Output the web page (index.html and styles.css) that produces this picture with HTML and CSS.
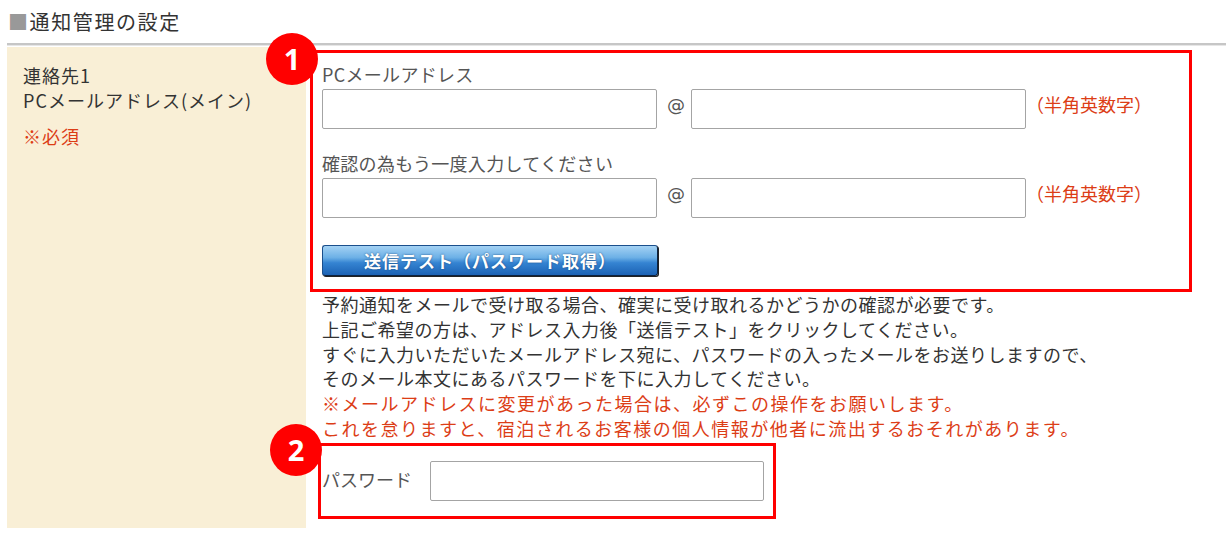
FILE: index.html
```html
<!DOCTYPE html>
<html lang="ja">
<head>
    <meta charset="UTF-8">
    <title>通知管理の設定</title>
    <link rel="stylesheet" href="styles.css">
</head>
<body>
    <div class="page">
        <h2 class="section-title"><span class="mark">■</span>通知管理の設定</h2>

        <div class="setting-row">
            <!-- Left label column -->
            <div class="label-col">
                <p>連絡先1</p>
                <p>PCメールアドレス(メイン)</p>
                <p class="required">※必須</p>
            </div>

            <!-- Right input column -->
            <div class="input-col">
                <div class="mark-box box-mail">
                    <span class="badge">1</span>
                    <div class="field-label">PCメールアドレス</div>
                    <div class="mail-row">
                        <input type="text" class="text-input">
                        <span class="at">@</span>
                        <input type="text" class="text-input">
                        <span class="note">（半角英数字）</span>
                    </div>
                    <div class="field-label second">確認の為もう一度入力してください</div>
                    <div class="mail-row">
                        <input type="text" class="text-input">
                        <span class="at">@</span>
                        <input type="text" class="text-input">
                        <span class="note">（半角英数字）</span>
                    </div>
                    <button type="button" class="send-btn">送信テスト（パスワード取得）</button>
                </div>

                <div class="help">
                    <p>予約通知をメールで受け取る場合、確実に受け取れるかどうかの確認が必要です。</p>
                    <p>上記ご希望の方は、アドレス入力後「送信テスト」をクリックしてください。</p>
                    <p>すぐに入力いただいたメールアドレス宛に、パスワードの入ったメールをお送りしますので、</p>
                    <p>そのメール本文にあるパスワードを下に入力してください。</p>
                    <p class="warn">※メールアドレスに変更があった場合は、必ずこの操作をお願いします。</p>
                    <p class="warn">これを怠りますと、宿泊されるお客様の個人情報が他者に流出するおそれがあります。</p>
                </div>

                <div class="mark-box box-pass">
                    <span class="badge">2</span>
                    <span class="pass-label">パスワード</span>
                    <input type="text" class="text-input pass-input">
                </div>
            </div>
        </div>
    </div>
</body>
</html>
```

FILE: styles.css
```css
:root {
    --text-color: #333333;
    --label-color: #555555;
    --warn-color: #dc3d16;
    --mark-red: #ff0000;
    --beige: #f9efd6;
}

* {
    margin: 0;
    padding: 0;
    box-sizing: border-box;
}

body {
    background: #ffffff;
    font-family: "Noto Sans CJK JP", "Noto Sans", sans-serif;
    color: var(--text-color);
    font-size: 18px;
}

.page {
    padding-left: 7px;
}

/* Section heading */
.section-title {
    height: 45px;
    line-height: 43px;
    padding-left: 1px;
    font-size: 20px;
    font-weight: normal;
    letter-spacing: 1.6px;
    color: #333333;
    border-bottom: 2px solid #c6c6c6;
    box-shadow: 0 1px 0 #e6e6e6;
    margin-bottom: 2px;
}

.section-title .mark {
    color: #999999;
}

/* Row */
.setting-row {
    display: flex;
}

.label-col {
    width: 299px;
    background: var(--beige);
    padding: 16px 0 0 16px;
    line-height: 25px;
    letter-spacing: 1px;
}

.label-col .required {
    margin-top: 11px;
    color: var(--warn-color);
}

.input-col {
    padding: 3px 0 9px 4px;
}

/* Red marker boxes */
.mark-box {
    position: relative;
    border: 3px solid var(--mark-red);
}

.badge {
    position: absolute;
    width: 52px;
    height: 52px;
    border-radius: 50%;
    background: var(--mark-red);
    color: #ffffff;
    font-family: "Open Sans", "Liberation Sans", sans-serif;
    font-weight: bold;
    font-size: 29px;
    line-height: 52px;
    letter-spacing: 0;
    text-align: center;
    z-index: 2;
}

.box-mail {
    width: 882px;
    padding: 9px 0 13px 9px;
}

.box-mail .badge {
    left: -47px;
    top: -20px;
}

.field-label {
    line-height: 24px;
    letter-spacing: 0.3px;
    color: var(--label-color);
}

.field-label.second {
    margin-top: 22px;
}

.mail-row {
    display: flex;
    align-items: center;
    margin-top: 3px;
}

.text-input {
    width: 335px;
    height: 40px;
    border: 1px solid #a4a4a4;
    border-radius: 2px;
    background: #ffffff;
}

.at {
    margin: 0 9px 0 10px;
    width: 15px;
    font-family: "DejaVu Sans", sans-serif;
    font-size: 18px;
    color: #555555;
    position: relative;
    top: -5px;
}

.note {
    margin-left: 0;
    color: var(--warn-color);
    position: relative;
    top: -5px;
}

.send-btn {
    display: block;
    margin-top: 27px;
    width: 336px;
    height: 31px;
    border: 1px solid #1b4f8c;
    border-right-color: #0c2240;
    border-bottom-color: #0c2240;
    border-radius: 3px;
    box-shadow: 1px 1px 0 #222222;
    background: linear-gradient(#a4d2f4 0%, #6cb0e6 40%, #3584d2 58%, #1c62b4 100%);
    color: #ffffff;
    font-family: "Noto Sans CJK JP", sans-serif;
    font-weight: bold;
    font-size: 17px;
    letter-spacing: 1px;
    text-shadow: 0 0 2px #1a4a80;
    line-height: 29px;
}

/* Help text */
.help {
    padding-left: 12px;
    line-height: 24.8px;
    letter-spacing: 0.5px;
    color: var(--text-color);
}

.help p {
    white-space: nowrap;
}

.help .warn {
    color: var(--warn-color);
    letter-spacing: 1.5px;
}

/* Password box */
.box-pass {
    display: flex;
    align-items: center;
    width: 458px;
    height: 76px;
    margin: 2px 0 0 8px;
    padding-left: 1px;
}

.box-pass .badge {
    left: -51px;
    top: -22px;
}

.pass-label {
    width: 93px;
    color: var(--label-color);
    position: relative;
    top: -2px;
}

.pass-input {
    width: 334px;
    margin-left: 15px;
    margin-top: 1px;
}
```
